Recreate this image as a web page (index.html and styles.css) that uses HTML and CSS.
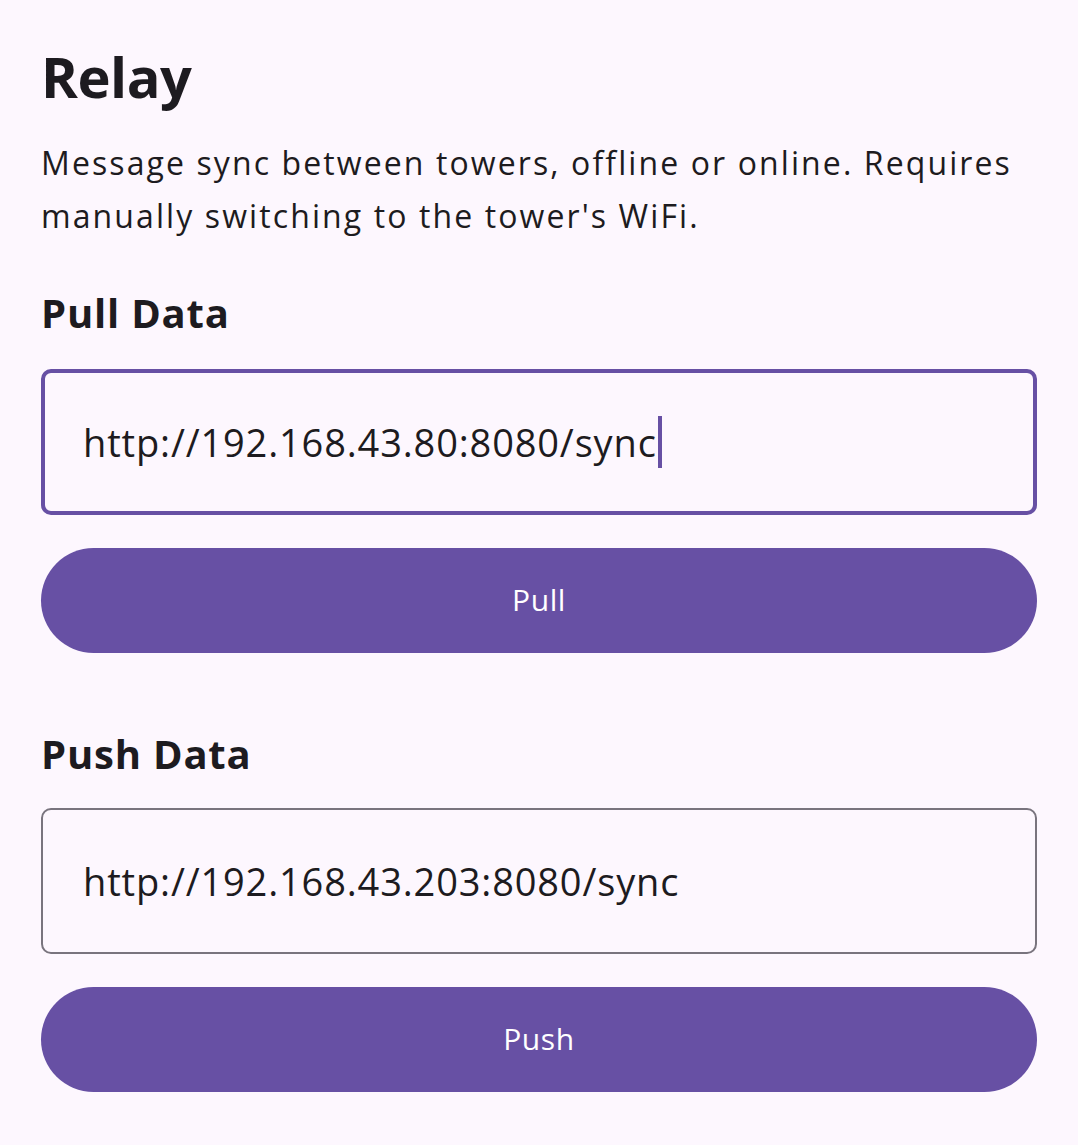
FILE: index.html
```html
<!DOCTYPE html>
<html lang="en">
<head>
<meta charset="utf-8">
<title>Relay</title>
<link rel="stylesheet" href="styles.css">
</head>
<body>
<main class="screen">
  <h1 class="title">Relay</h1>
  <p class="desc">Message sync between towers, offline or online. Requires manually switching to the tower's WiFi.</p>

  <section class="section">
    <h2 class="heading">Pull Data</h2>
    <div class="field field-focused">
      <span class="field-text">http://192.168.43.80:8080/sync</span><span class="caret"></span>
    </div>
    <button class="btn" type="button">Pull</button>
  </section>

  <section class="section section-push">
    <h2 class="heading">Push Data</h2>
    <div class="field">
      <span class="field-text">http://192.168.43.203:8080/sync</span>
    </div>
    <button class="btn" type="button">Push</button>
  </section>
</main>
</body>
</html>
```

FILE: styles.css
```css
html, body {
  margin: 0;
  padding: 0;
  background: #fdf7fe;
}

body {
  font-family: "Open Sans", "Noto Sans", sans-serif;
  color: #1d1b20;
}

.screen {
  padding: 36px 41px 0 41px;
  display: flex;
  flex-direction: column;
}

.title {
  margin: 0;
  font-size: 56px;
  font-weight: 700;
  line-height: 80px;
  letter-spacing: -0.5px;
}

.desc {
  margin: 20px 0 0 0;
  font-size: 32px;
  line-height: 53px;
  font-weight: 400;
  letter-spacing: 2.1px;
}

.section {
  display: flex;
  flex-direction: column;
}

.heading {
  margin: 0;
  font-size: 40px;
  font-weight: 700;
  line-height: 56px;
  letter-spacing: 0.8px;
}

.section .heading {
  margin-top: 43px;
  margin-bottom: 28px;
}

.section-push .heading {
  margin-top: 73px;
  margin-bottom: 26px;
}

.field {
  box-sizing: border-box;
  height: 146px;
  border: 2px solid #79747e;
  border-radius: 10px;
  display: flex;
  align-items: center;
  padding-left: 40px;
  font-size: 38px;
}

.field-focused {
  border: 4px solid #6750a4;
  padding-left: 38px;
}

.field-text {
  color: #1d1b20;
  letter-spacing: 0.85px;
}

.caret {
  display: inline-block;
  width: 4px;
  height: 52px;
  background: #6750a4;
  margin-left: 1px;
}

.btn {
  margin-top: 33px;
  height: 105px;
  border: none;
  border-radius: 53px;
  background: #6750a4;
  color: #ffffff;
  font-family: "Open Sans", "Noto Sans", sans-serif;
  font-size: 30px;
  font-weight: 500;
  letter-spacing: 0.6px;
  padding: 0 0 3px 0;
  cursor: pointer;
}
```
